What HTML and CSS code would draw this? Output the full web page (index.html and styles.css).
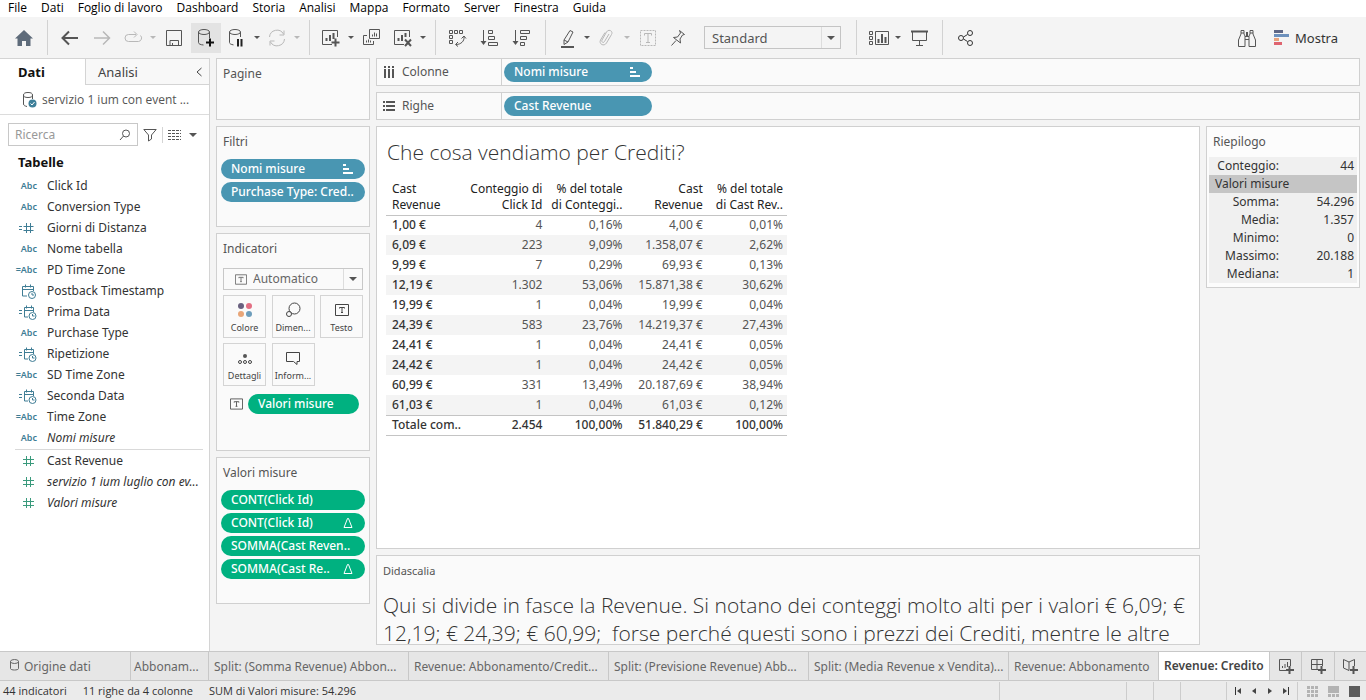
FILE: index.html
```
<!DOCTYPE html>
<html lang="it">
<head>
<meta charset="utf-8">
<meta name="viewport" content="width=device-width, initial-scale=1">
<title>Revenue: Credito</title>
<link rel="stylesheet" href="styles.css">
</head>
<body>
<svg class="sprite" aria-hidden="true">
  <symbol id="cal" viewBox="0 0 18 16"><path d="M8 13H3.500V3.500h11V8M3.500 6.500h11M6.500 1.500v3M11.500 1.500v3" /><circle cx="13" cy="12" r="3.500"/><path d="M13 10v2h2"/></symbol>
  <symbol id="calc-cal" viewBox="0 0 18 16"><path d="M0 6.500h3M0 9.500h3M9 13H5.500V3.500h9V8M5.500 6.500h9M7.500 1.500v3M12.500 1.500v3"/><circle cx="13.500" cy="12" r="3.500"/><path d="M13.500 10v2h2"/></symbol>
  <symbol id="hash" viewBox="0 0 18 16"><path d="M7.500 3v10M11.500 3v10M4 6.500h11M4 10.500h11"/></symbol>
  <symbol id="calc-hash" viewBox="0 0 18 16"><path d="M0 6.500h3M0 9.500h3M7.500 3v10M11.500 3v10M4.500 6.500h10M4.500 10.500h10"/></symbol>
  <symbol id="sorted" viewBox="0 0 12 12"><path d="M1 1h3v2H1zM1 5h6v2H1zM1 9h10v2H1z" fill="currentColor" stroke="none"/></symbol>
  <symbol id="delta" viewBox="0 0 12 12"><path d="M2 10.500 5.500 1.500h1L10 10.500z"/></symbol>
  <symbol id="tbox" viewBox="0 0 14 12"><path d="M.5.5h13v11H.5zM4.500 4.500v-1h5v1M7 3.500v5M6 8.500h2"/></symbol>
  <symbol id="down" viewBox="0 0 8 6"><path d="M0 1h8L4 5z" fill="currentColor" stroke="none"/></symbol>
</svg>

<nav class="menubar" aria-label="Menu">
  <a href="#">File</a><a href="#">Dati</a><a href="#">Foglio di lavoro</a><a href="#">Dashboard</a><a href="#">Storia</a><a href="#">Analisi</a><a href="#">Mappa</a><a href="#">Formato</a><a href="#">Server</a><a href="#">Finestra</a><a href="#">Guida</a>
</nav>

<div class="toolbar" role="toolbar" aria-label="Strumenti">
  <button class="tool" aria-label="Pagina iniziale"><svg width="20" height="20"><path d="M10 2 1 10.500h2.500V18H8v-5h4v5h4.500v-7.500H19z" fill="#5e6b7a" stroke="none"/></svg></button>
  <span class="sep"></span>
  <button class="tool" aria-label="Annulla"><svg width="20" height="20"><path d="M18 10H3M9 3.500 2.500 10 9 16.500" stroke-width="2"/></svg></button>
  <button class="tool dim" aria-label="Ripeti"><svg width="20" height="20"><path d="M2 10h15M11 3.500 17.500 10 11 16.500" stroke-width="1.500"/></svg></button>
  <button class="tool dim" aria-label="Riproduci"><svg width="20" height="20"><path d="M12 6.500H4.500a3.500 3.500 0 0 0 0 7h10a3.500 3.500 0 0 0 2-6M10 3.500l3 3-3 3"/></svg></button>
  <button class="caret dim" aria-label="Opzioni riproduzione"><svg width="6" height="5"><use href="#down"/></svg></button>
  <button class="tool" aria-label="Salva"><svg width="20" height="20"><path d="M2.500 2.500h15v15h-15zM6 17.500v-5h8.500v5M8.500 15v2.500"/></svg></button>
  <button class="tool active" aria-label="Nuova origine dati"><svg width="20" height="20"><ellipse cx="8" cy="4" rx="5.500" ry="2.500"/><path d="M2.500 4v10.500c0 1.400 2 2.300 5 2.500M13.500 4v6"/><path d="M14 10.500v8M10 14.500h8" stroke="#111" stroke-width="2"/></svg></button>
  <button class="tool" aria-label="Sospendi aggiornamenti"><svg width="20" height="20"><ellipse cx="7" cy="4" rx="5.500" ry="2.500"/><path d="M1.500 4v10.500c0 1.200 1.500 2 4 2.400M12.500 4v5"/><path d="M10 11v7.500M13.500 11v7.500" stroke="#222" stroke-width="2"/></svg></button>
  <button class="caret" aria-label="Opzioni aggiornamento"><svg width="6" height="5"><use href="#down"/></svg></button>
  <button class="tool dim" aria-label="Aggiorna"><svg width="20" height="20"><path d="M1.500 9A7.500 7.500 0 0 1 15.500 6M16.500 11a7.500 7.500 0 0 1-14 3M16 2.500V7h-4.500M2 17.500V13h4.500"/></svg></button>
  <button class="caret dim" aria-label="Opzioni"><svg width="6" height="5"><use href="#down"/></svg></button>
  <span class="sep"></span>
  <button class="tool" aria-label="Nuovo foglio"><svg width="20" height="20"><path d="M10 16.500H.5v-14h15V9"/><path d="M4.500 13v-3M8 13V7M11.500 11V5M13.500 10.500v8M9.500 14.500h8" stroke-width="2"/></svg></button>
  <button class="caret" aria-label="Opzioni nuovo foglio"><svg width="6" height="5"><use href="#down"/></svg></button>
  <button class="tool" aria-label="Duplica"><svg width="20" height="20"><path d="M7.500 1.500h10v9h-10zM5 7.500H1.500v9h10V13M10.500 8.500v-2M12.500 8.500v-4M14.500 8.500v-3M4.500 14.500v-2M6.500 14.500v-3M8.500 14.500v-2"/></svg></button>
  <button class="tool" aria-label="Cancella foglio"><svg width="20" height="20"><path d="M10 16.500H.5v-14h15V9"/><path d="M4.500 13v-3M8 13V7M11.500 9V5M11 11.500l6 6.500M17 11.500 11 18" stroke-width="2"/></svg></button>
  <button class="caret" aria-label="Opzioni cancellazione"><svg width="6" height="5"><use href="#down"/></svg></button>
  <span class="sep"></span>
  <button class="tool" aria-label="Scambia"><svg width="20" height="20"><path d="M1.500 2.500h3v3h-3zM6.500 2.500h3v3h-3zM11.500 2.500h3v3h-3zM1.500 7.500h3v3h-3zM1.500 12.500h3v3h-3zM16 9c.5 4-3 7.500-8 7.500M13.500 10.500 16 8l2 2.500M10 14l-2.500 2.500L10 18.500"/></svg></button>
  <button class="tool" aria-label="Ordine crescente"><svg width="20" height="20"><path d="M3.500 2v12"/><path d="M.5 13h6l-3 4z" fill="currentColor" stroke="none"/><path d="M8.500 2.500h4v3h-4zM8.500 8.500h6v3h-6zM8.500 14.500h9v3h-9z"/></svg></button>
  <button class="tool" aria-label="Ordine decrescente"><svg width="20" height="20"><path d="M3.500 2v12"/><path d="M.5 13h6l-3 4z" fill="currentColor" stroke="none"/><path d="M8.500 2.500h9v3h-9zM8.500 8.500h6v3h-6zM8.500 14.500h4v3h-4z"/></svg></button>
  <span class="sep"></span>
  <button class="tool" aria-label="Evidenzia"><svg width="20" height="20"><path d="M12 2.500l3 1.500-5 10-4 2.500v-4.500zM6 12l4 2"/><path d="M3 19h13" stroke-width="2"/></svg></button>
  <button class="caret" aria-label="Opzioni evidenziazione"><svg width="6" height="5"><use href="#down"/></svg></button>
  <button class="tool dim" aria-label="Raggruppa"><svg width="20" height="20"><path d="M11 6l-4.500 7.500c-1 2-3.500.5-2.500-1.500L8.500 4c2-3.500 7-1 5 2.500l-5 8.500c-2.500 4-8 1-6-3L7 4.500"/></svg></button>
  <button class="caret dim" aria-label="Opzioni gruppo"><svg width="6" height="5"><use href="#down"/></svg></button>
  <button class="tool dim" aria-label="Etichette"><svg width="20" height="20"><path d="M2.500 2.500h15v15h-15z" stroke-dasharray="2 1"/><path d="M6.500 7.500v-2h7v2M10 5.500v9M8 14.500h4"/></svg></button>
  <button class="tool" aria-label="Fissa"><svg width="20" height="20"><path d="M9.500 2.500l5 4-2 .5-2.500 4 .5 4-7-5.500 4-.5 3-4zM6 12.500l-4.500 5"/></svg></button>
  <div class="fit"><select aria-label="Adatta"><option>Standard</option></select><span class="drop"><svg width="8" height="6"><use href="#down"/></svg></span></div>
  <span class="sep wide"></span>
  <button class="tool" aria-label="Mostra schede"><svg width="20" height="20"><path d="M.5 3.500h3v3h-3zM.5 8.500h3v3h-3zM.5 13.500h3v3h-3zM6.500 3.500h13v13h-13z"/><path d="M9.500 15v-4M13 15V6M16.500 15V9" stroke-width="2"/></svg></button>
  <button class="caret" aria-label="Opzioni schede"><svg width="6" height="5"><use href="#down"/></svg></button>
  <button class="tool" aria-label="Presentazione"><svg width="20" height="20"><path d="M3.500 4v8.500h14V4M10.500 12.500v5M7 17.500h7"/><path d="M2 3.500h17" stroke-width="2"/></svg></button>
  <span class="sep"></span>
  <button class="tool" aria-label="Condividi"><svg width="20" height="20"><g stroke="#333"><circle cx="6" cy="10" r="2.500"/><circle cx="15" cy="5" r="2.500"/><circle cx="15" cy="15" r="2.500"/><path d="M8.500 9 12.500 6.500M8.500 11l4 2.500"/></g></svg></button>
  <span class="grow"></span>
  <button class="tool" aria-label="Trova"><svg width="20" height="20"><path d="M1.500 18.500V12L4 6V2.500h3V6l1 2v10.500zM12 18.500V8l1-2V2.500h3V6l2.500 6v6.500zM8 8.500h4M8 11.500h4M4 5h3M13 5h3M9.500 4v4M10.500 4v4"/></svg></button>
  <button class="show"><svg width="15" height="16"><path d="M0 0h9v3H0z" fill="#5f6785"/><path d="M0 4h15v3H0z" fill="#6d91bd"/><path d="M0 8h5v3H0z" fill="#e9a37c"/><path d="M0 12h8v3H0z" fill="#df6470"/></svg>Mostra</button>
</div>

<main class="work">
  <aside class="data">
    <div class="data-tabs"><button class="dtab on">Dati</button><button class="dtab">Analisi<svg width="8" height="10"><path d="M6.500 1 2 5l4.500 4"/></svg></button></div>
    <div class="source"><svg width="17" height="18"><ellipse cx="7" cy="4" rx="4.500" ry="2.500"/><path d="M2.500 4v9c0 1.500 1.500 2 3.500 2.500M11.500 4v4"/><circle cx="11.500" cy="12.500" r="4" fill="#3d7f99" stroke="none"/><path d="M9.500 12.500l1.500 1.500 2.500-3" stroke="#fff"/></svg><span>servizio 1 ium con event ...</span></div>
    <div class="find">
      <label class="search"><input type="text" placeholder="Ricerca" aria-label="Ricerca"><svg width="12" height="12"><circle cx="7" cy="4.500" r="3.500"/><path d="M4.500 7 1 11"/></svg></label>
      <button class="mini" aria-label="Filtra"><svg width="14" height="14"><path d="M.8 1.500h12.400L8.500 7v4L5.500 13V7z"/></svg></button>
      <span class="vline"></span>
      <button class="mini" aria-label="Visualizza"><svg width="13" height="12"><path d="M0 1.500h13M0 4.500h13M0 7.500h13M0 10.500h13" stroke-dasharray="3 1"/></svg><svg width="8" height="6"><use href="#down"/></svg></button>
    </div>
    <h2>Tabelle</h2>
    <ul class="fields dims">
      <li><i>Abc</i>Click Id</li>
      <li><i>Abc</i>Conversion Type</li>
      <li><i><svg width="18" height="16"><use href="#calc-hash"/></svg></i>Giorni di Distanza</li>
      <li><i>Abc</i>Nome tabella</li>
      <li><i>=Abc</i>PD Time Zone</li>
      <li><i><svg width="18" height="16"><use href="#cal"/></svg></i>Postback Timestamp</li>
      <li><i><svg width="18" height="16"><use href="#calc-cal"/></svg></i>Prima Data</li>
      <li><i>Abc</i>Purchase Type</li>
      <li><i><svg width="18" height="16"><use href="#calc-cal"/></svg></i>Ripetizione</li>
      <li><i>=Abc</i>SD Time Zone</li>
      <li><i><svg width="18" height="16"><use href="#calc-cal"/></svg></i>Seconda Data</li>
      <li><i>=Abc</i>Time Zone</li>
      <li><i>Abc</i><em>Nomi misure</em></li>
    </ul>
    <ul class="fields measures">
      <li><i><svg width="18" height="16"><use href="#hash"/></svg></i>Cast Revenue</li>
      <li><i><svg width="18" height="16"><use href="#hash"/></svg></i><em>servizio 1 ium luglio con ev...</em></li>
      <li><i><svg width="18" height="16"><use href="#hash"/></svg></i><em>Valori misure</em></li>
    </ul>
  </aside>

  <div class="cards">
    <section class="card pages"><h3>Pagine</h3></section>
    <section class="card filters"><h3>Filtri</h3>
      <button class="pill blue"><span>Nomi misure</span><svg width="12" height="12"><use href="#sorted"/></svg></button>
      <button class="pill blue"><span>Purchase Type: Cred..</span></button>
    </section>
    <section class="card marks"><h3>Indicatori</h3>
      <div class="mark-type"><svg width="12" height="11"><use href="#tbox"/></svg><select aria-label="Tipo di indicatore"><option>Automatico</option></select><span class="drop"><svg width="8" height="6"><use href="#down"/></svg></span></div>
      <div class="mark-grid">
        <button><svg width="18" height="18"><g stroke="none"><circle cx="5" cy="5" r="3" fill="#69607f"/><circle cx="13" cy="5" r="3" fill="#e36f83"/><circle cx="5" cy="13" r="3" fill="#e8a578"/><circle cx="13" cy="13" r="3" fill="#6d9dbb"/></g></svg>Colore</button>
        <button><svg width="18" height="18"><circle cx="10.500" cy="7.500" r="5.500"/><circle cx="5" cy="13" r="2.500" fill="#fafafa"/></svg>Dimen...</button>
        <button><svg width="14" height="18" viewBox="0 0 14 12"><use href="#tbox"/></svg>Testo</button>
        <button><svg width="18" height="18"><circle cx="9" cy="7" r="2" fill="#555" stroke="none"/><circle cx="4" cy="13" r="1.500"/><circle cx="9" cy="13" r="1.500"/><circle cx="14" cy="13" r="1.500"/></svg>Dettagli</button>
        <button><svg width="18" height="18"><path d="M2.500 3.500h13v9h-2.500v3l-3.500-3h-7z"/></svg>Inform...</button>
      </div>
      <div class="mark-pill"><svg width="13" height="12"><use href="#tbox"/></svg><button class="pill green"><span>Valori misure</span></button></div>
    </section>
    <section class="card values"><h3>Valori misure</h3>
      <button class="pill green"><span>CONT(Click Id)</span></button>
      <button class="pill green"><span>CONT(Click Id)</span><svg width="12" height="12"><use href="#delta"/></svg></button>
      <button class="pill green"><span>SOMMA(Cast Reven..</span></button>
      <button class="pill green"><span>SOMMA(Cast Re..</span><svg width="12" height="12"><use href="#delta"/></svg></button>
    </section>
  </div>

  <div class="sheet">
    <section class="shelf"><h3><svg width="12" height="12"><path d="M2 0v2M6 0v2M10 0v2M2 3v9M6 3v9M10 3v9" stroke-width="2"/></svg>Colonne</h3><button class="pill blue"><span>Nomi misure</span><svg width="12" height="12"><use href="#sorted"/></svg></button></section>
    <section class="shelf"><h3><svg width="12" height="12"><path d="M0 2h2M0 6h2M0 10h2M3 2h9M3 6h9M3 10h9" stroke-width="2"/></svg>Righe</h3><button class="pill blue"><span>Cast Revenue</span></button></section>
    <div class="stage">
      <div class="view-col">
        <section class="view">
          <h1>Che cosa vendiamo per Crediti?</h1>
          <table>
            <thead><tr><th>Cast<br>Revenue</th><th>Conteggio di<br>Click Id</th><th>% del totale<br>di Conteggi..</th><th>Cast<br>Revenue</th><th>% del totale<br>di Cast Rev..</th></tr></thead>
            <tbody>
              <tr><th>1,00 €</th><td>4</td><td>0,16%</td><td>4,00 €</td><td>0,01%</td></tr>
              <tr><th>6,09 €</th><td>223</td><td>9,09%</td><td>1.358,07 €</td><td>2,62%</td></tr>
              <tr><th>9,99 €</th><td>7</td><td>0,29%</td><td>69,93 €</td><td>0,13%</td></tr>
              <tr><th>12,19 €</th><td>1.302</td><td>53,06%</td><td>15.871,38 €</td><td>30,62%</td></tr>
              <tr><th>19,99 €</th><td>1</td><td>0,04%</td><td>19,99 €</td><td>0,04%</td></tr>
              <tr><th>24,39 €</th><td>583</td><td>23,76%</td><td>14.219,37 €</td><td>27,43%</td></tr>
              <tr><th>24,41 €</th><td>1</td><td>0,04%</td><td>24,41 €</td><td>0,05%</td></tr>
              <tr><th>24,42 €</th><td>1</td><td>0,04%</td><td>24,42 €</td><td>0,05%</td></tr>
              <tr><th>60,99 €</th><td>331</td><td>13,49%</td><td>20.187,69 €</td><td>38,94%</td></tr>
              <tr><th>61,03 €</th><td>1</td><td>0,04%</td><td>61,03 €</td><td>0,12%</td></tr>
            </tbody>
            <tfoot><tr><th>Totale com..</th><td>2.454</td><td>100,00%</td><td>51.840,29 €</td><td>100,00%</td></tr></tfoot>
          </table>
        </section>
        <section class="caption"><h3>Didascalia</h3><p>Qui si divide in fasce la Revenue. Si notano dei conteggi molto alti per i valori € 6,09; €<br>12,19; € 24,39; € 60,99;&nbsp; forse perché questi sono i prezzi dei Crediti, mentre le altre</p></section>
      </div>
      <section class="summary"><h3>Riepilogo</h3>
        <dl>
          <div><dt>Conteggio:</dt><dd>44</dd></div>
          <div class="group"><dt>Valori misure</dt></div>
          <div><dt>Somma:</dt><dd>54.296</dd></div>
          <div><dt>Media:</dt><dd>1.357</dd></div>
          <div><dt>Minimo:</dt><dd>0</dd></div>
          <div><dt>Massimo:</dt><dd>20.188</dd></div>
          <div><dt>Mediana:</dt><dd>1</dd></div>
        </dl>
      </section>
    </div>
  </div>
</main>

<nav class="tabs" aria-label="Fogli">
  <a href="#" class="origin"><svg width="9" height="12"><ellipse cx="4.500" cy="2.500" rx="4" ry="2"/><path d="M.5 2.500v7c0 2 8 2 8 0v-7"/></svg>Origine dati</a>
  <a href="#" class="short">Abbonam...</a>
  <a href="#">Split: (Somma Revenue) Abbon...</a>
  <a href="#">Revenue: Abbonamento/Credit...</a>
  <a href="#">Split: (Previsione Revenue) Abb...</a>
  <a href="#">Split: (Media Revenue x Vendita)...</a>
  <a href="#" class="mid">Revenue: Abbonamento</a>
  <a href="#" class="current" aria-current="page">Revenue: Credito</a>
  <button aria-label="Nuovo foglio di lavoro"><svg width="16" height="16"><path d="M8 12.500H1.500v-11h11V8M4.500 10V8M7 10V6M9.500 9V4"/><path d="M11.500 8v8M8 12h8" stroke-width="2"/></svg></button>
  <button aria-label="Nuova dashboard"><svg width="16" height="16"><path d="M8 11.500H1.500v-10h11V8M1.500 6.500h11M7 1.500v10"/><path d="M11.500 8v8M8 12h8" stroke-width="2"/></svg></button>
  <button aria-label="Nuova storia"><svg width="16" height="16"><path d="M7 4v8.500L1.500 10V1.500L7 4l5.500-2.500V8"/><path d="M11.500 8v8M8 12h8" stroke-width="2"/></svg></button>
</nav>

<footer class="status">
  <span>44 indicatori</span><span>11 righe da 4 colonne</span><span>SUM di Valori misure: 54.296</span>
  <div class="cells"><b class="c1"></b><b></b><b></b><b class="c2"></b></div>
  <div class="pager">
    <button aria-label="Primo"><svg width="8" height="8"><path d="M1.500 0v8"/><path d="M7 1v6L3 4z" fill="#444" stroke="none"/></svg></button>
    <button aria-label="Precedente"><svg width="8" height="8"><path d="M6 1v6L2 4z" fill="#444" stroke="none"/></svg></button>
    <button aria-label="Successivo"><svg width="8" height="8"><path d="M2 1v6l4-3z" fill="#444" stroke="none"/></svg></button>
    <button aria-label="Ultimo"><svg width="8" height="8"><path d="M6.500 0v8"/><path d="M1 1v6l4-3z" fill="#444" stroke="none"/></svg></button>
  </div>
  <div class="modes">
    <button aria-label="Ordina fogli"><svg width="11" height="11"><path d="M0 1.500h11M0 5.500h11M0 9.500h11" stroke="#b3b3b3" stroke-width="3" stroke-dasharray="3 1"/></svg></button>
    <button aria-label="Pellicola"><svg width="11" height="11"><path d="M0 0h11v7H0z" fill="#b3b3b3" stroke="none"/><path d="M0 9.500h11" stroke="#b3b3b3" stroke-width="3" stroke-dasharray="3 1"/></svg></button>
    <button aria-label="Schede"><svg width="11" height="11"><path d="M0 0h11v11H0z" fill="#5c5c5c" stroke="none"/></svg></button>
  </div>
</footer>
</body>
</html>
```
FILE: styles.css
```
* { box-sizing: border-box; }
body {
  margin: 0;
  height: 100vh;
  display: flex;
  flex-direction: column;
  overflow: hidden;
  background: #f4f4f4;
  color: #333;
  font: 12px/16px "Noto Sans", "Open Sans", sans-serif;
}
h1, h2, h3, p, ul, dl, dd { margin: 0; padding: 0; font-weight: 400; }
ul { list-style: none; }
a { color: inherit; text-decoration: none; }
button, select, input { font: inherit; color: inherit; }
button { border: 0; padding: 0; background: none; }
select { appearance: none; border: 0; background: none; padding: 0; outline: 0; }
svg { fill: none; stroke: currentColor; stroke-width: 1; flex: none; display: block; }
.sprite { position: absolute; width: 0; height: 0; }
h3 { font-size: 12px; line-height: 16px; color: #555; }

.menubar {
  flex: none;
  display: flex;
  gap: 14px;
  height: 17px;
  padding-left: 8px;
  background: #fff;
  color: #000;
  font: 12px/16px "Open Sans", "Noto Sans", sans-serif;
}

.toolbar {
  flex: none;
  display: flex;
  align-items: center;
  height: 41px;
  padding: 0 28px 0 9px;
  color: #555;
}
.tool {
  flex: none;
  display: grid;
  place-items: center;
  width: 30px;
  height: 30px;
  margin-right: 2px;
}
.tool.active { background: #e3e3e3; }
.caret {
  flex: none;
  display: grid;
  place-items: center;
  width: 8px;
  height: 30px;
  margin: 0 2px 0 -2px;
}
.dim { color: #b8b8b8; }
.sep { flex: none; width: 1px; height: 35px; margin: 0 7px 0 6px; background: #d2d2d2; }
.sep.wide { margin-left: 15px; }
.grow { flex: 1; }
.fit {
  display: flex;
  width: 137px;
  height: 23px;
  margin-left: 7px;
  border: 1px solid #c4c4c4;
  font-size: 13px;
}
.fit select { flex: 1; min-width: 0; padding-left: 7px; }
.drop { display: grid; place-items: center; width: 19px; border-left: 1px solid #ddd; color: #555; }
.show { display: flex; align-items: center; gap: 6px; margin-left: 10px; color: #333; font-size: 13px; }
.show svg { stroke: none; }

.work { flex: 1; min-height: 0; display: flex; gap: 6px; padding-right: 6px; }

.data { width: 210px; flex: none; background: #fff; border-right: 1px solid #d4d4d4; border-top: 1px solid #d4d4d4; }
.data-tabs { display: flex; height: 26px; }
.dtab { width: 85px; text-align: left; padding-left: 18px; font-size: 13px; color: #444; }
.dtab.on { font-weight: 700; color: #111; }
.dtab:not(.on) {
  flex: 1;
  display: flex;
  align-items: center;
  justify-content: space-between;
  padding: 0 6px 0 12px;
  background: #f8f8f8;
  border: solid #d4d4d4;
  border-width: 0 0 1px 1px;
}
.source { display: flex; align-items: center; gap: 4px; height: 30px; padding-left: 21px; border-bottom: 1px solid #dcdcdc; color: #555; font-family: "Open Sans", "Noto Sans", sans-serif; }
.find { display: flex; align-items: center; gap: 5px; padding: 8px 0 0 8px; color: #555; }
.search { display: flex; align-items: center; width: 130px; height: 23px; padding: 0 6px; border: 1px solid #c8c8c8; }
.search input { flex: 1; min-width: 0; border: 0; outline: 0; padding: 0; background: none; }
.search input::placeholder { color: #999; opacity: 1; }
.mini { display: flex; align-items: center; gap: 8px; }
.vline { width: 1px; height: 16px; background: #d4d4d4; }
.data h2 { padding: 8px 0 5px 18px; font-size: 13px; line-height: 16px; font-weight: 700; color: #111; }
.fields li { display: flex; align-items: center; height: 21px; white-space: nowrap; }
.fields i { width: 37px; margin-right: 10px; display: flex; justify-content: flex-end; font: 600 9px/16px "Noto Sans", sans-serif; color: #3f7d95; }
.measures { margin-top: 1px; }
.measures::before { content: ""; display: block; height: 1px; margin: 0 6px 0 15px; background: #d9d9d9; }
.measures i { color: #3a9a7c; }

.cards { width: 154px; flex: none; display: flex; flex-direction: column; gap: 6px; }
.card { background: #fafafa; border: 1px solid #d0d0d0; padding: 7px 4px 0; }
.card h3 { padding-left: 2px; }
.pages { height: 62px; }
.filters { height: 101px; }
.marks { height: 218px; }
.values { height: 147px; }
.pill {
  display: flex;
  align-items: center;
  justify-content: space-between;
  width: 100%;
  height: 20px;
  margin-bottom: 3px;
  padding: 0 11px 0 10px;
  border-radius: 10px;
  color: #fff;
  font-weight: 500;
  white-space: nowrap;
}
.pill.blue { background: #4996b2; }
.pill.green { background: #00b180; }
.card h3 + .pill { margin-top: 9px; }

.mark-type { display: flex; align-items: center; height: 22px; margin: 11px 2px 5px; padding-left: 11px; border: 1px solid #c8c8c8; color: #666; }
.mark-type select { flex: 1; min-width: 0; padding-left: 6px; }
.mark-type .drop { height: 20px; }
.mark-grid { display: grid; grid-template-columns: repeat(3, 43px); justify-content: space-between; gap: 5px; margin: 0 2px; }
.mark-grid button { display: flex; flex-direction: column; align-items: center; height: 43px; padding-top: 5px; border: 1px solid #d4d4d4; font-size: 9px; line-height: 14px; color: #444; gap: 2px; }
.mark-pill { display: flex; align-items: center; gap: 5px; margin: 8px 6px 0 9px; color: #555; }
.mark-pill .pill { margin: 0; }

.sheet { flex: 1; min-width: 0; display: flex; flex-direction: column; gap: 6px; }
.shelf { flex: none; display: flex; align-items: center; height: 28px; background: #fafafa; border: 1px solid #d0d0d0; }
.shelf h3 { display: flex; align-items: center; gap: 7px; width: 125px; height: 26px; padding-left: 6px; border-right: 1px solid #d0d0d0; }
.shelf .pill { width: 148px; margin: 0 0 0 2px; }
.stage { flex: 1; min-height: 0; display: flex; align-items: flex-start; gap: 6px; }
.view-col { flex: 1; min-width: 0; height: 100%; padding-bottom: 6px; display: flex; flex-direction: column; gap: 6px; }
.view { flex: 1; min-height: 0; padding: 12px 10px; background: #fff; border: 1px solid #d0d0d0; }
h1 { font: 300 21px/26px "Open Sans", "Noto Sans", sans-serif; color: #333; margin-bottom: 15px; }
table { width: 401px; margin-left: -1px; table-layout: fixed; border-collapse: collapse; }
th, td { height: 20px; padding: 0 4px 0 0; text-align: right; font-weight: 400; color: #555; white-space: nowrap; line-height: 16px; }
th:first-child { text-align: left; padding-left: 6px; }
th, tfoot td { font-weight: 500; color: #333; }
thead th { height: 35px; font-weight: 400; color: #222; }
thead tr, tfoot tr { border-bottom: 1px solid #c4c4c4; }
tfoot tr { border-top: 1px solid #c4c4c4; }
tbody tr:nth-child(even) { background: #f4f4f4; }

.caption { flex: none; height: 90px; overflow: hidden; padding: 7px 6px 0; background: #fafafa; border: 1px solid #d0d0d0; }
.caption h3 { font-size: 11px; }
.caption p { margin-top: 12px; font: 300 21px/28px "Open Sans", "Noto Sans", sans-serif; white-space: nowrap; }

.summary { width: 154px; flex: none; padding: 7px 2px 4px; background: #fcfcfc; border: 1px solid #d0d0d0; }
.summary h3 { padding: 0 0 7px 4px; }
.summary dl { background: #f0f0f0; }
.summary dl div { display: flex; height: 18px; line-height: 18px; padding-right: 3px; }
.summary dt { width: 70px; text-align: right; white-space: nowrap; }
.summary dd { flex: 1; text-align: right; }
.summary .group { background: #c5c5c5; }
.summary .group dt { padding-left: 6px; text-align: left; }

.tabs { flex: none; display: flex; height: 30px; background: #e6e6e6; border: solid #c8c8c8; border-width: 1px 0; color: #666; }
.tabs a { flex: 0 0 200px; overflow: hidden; padding: 7px 0 0 5px; border-right: 1px solid #c8c8c8; white-space: nowrap; }
.tabs .origin { display: flex; gap: 5px; flex-basis: 131px; padding-left: 10px; }
.tabs .short { flex-basis: 78px; padding-left: 3px; }
.tabs .mid { flex-basis: 150px; }
.tabs .current { flex-basis: 111px; padding-top: 6px; background: #fff; font-weight: 600; color: #444; }
.tabs button { flex: 1; display: grid; place-items: center; border-right: 1px solid #c8c8c8; color: #555; }
.tabs button:last-child { border-right: 0; }

.status { flex: none; display: flex; align-items: center; gap: 16px; height: 19px; padding: 1px 0 0 3px; background: #ebebeb; font: 11px/16px "Open Sans", "Noto Sans", sans-serif; }
.cells { display: flex; height: 19px; margin-left: auto; }
.cells b { width: 27px; border-left: 1px solid #ccc; }
.cells .c1 { width: 127px; }
.cells .c2 { width: 46px; }
.pager { display: flex; align-items: center; justify-content: space-between; width: 72px; height: 19px; margin-left: -16px; padding: 0 7px; border: solid #ccc; border-width: 0 1px; }
.modes { display: flex; gap: 10px; margin-left: -7px; padding-right: 6px; }
```
